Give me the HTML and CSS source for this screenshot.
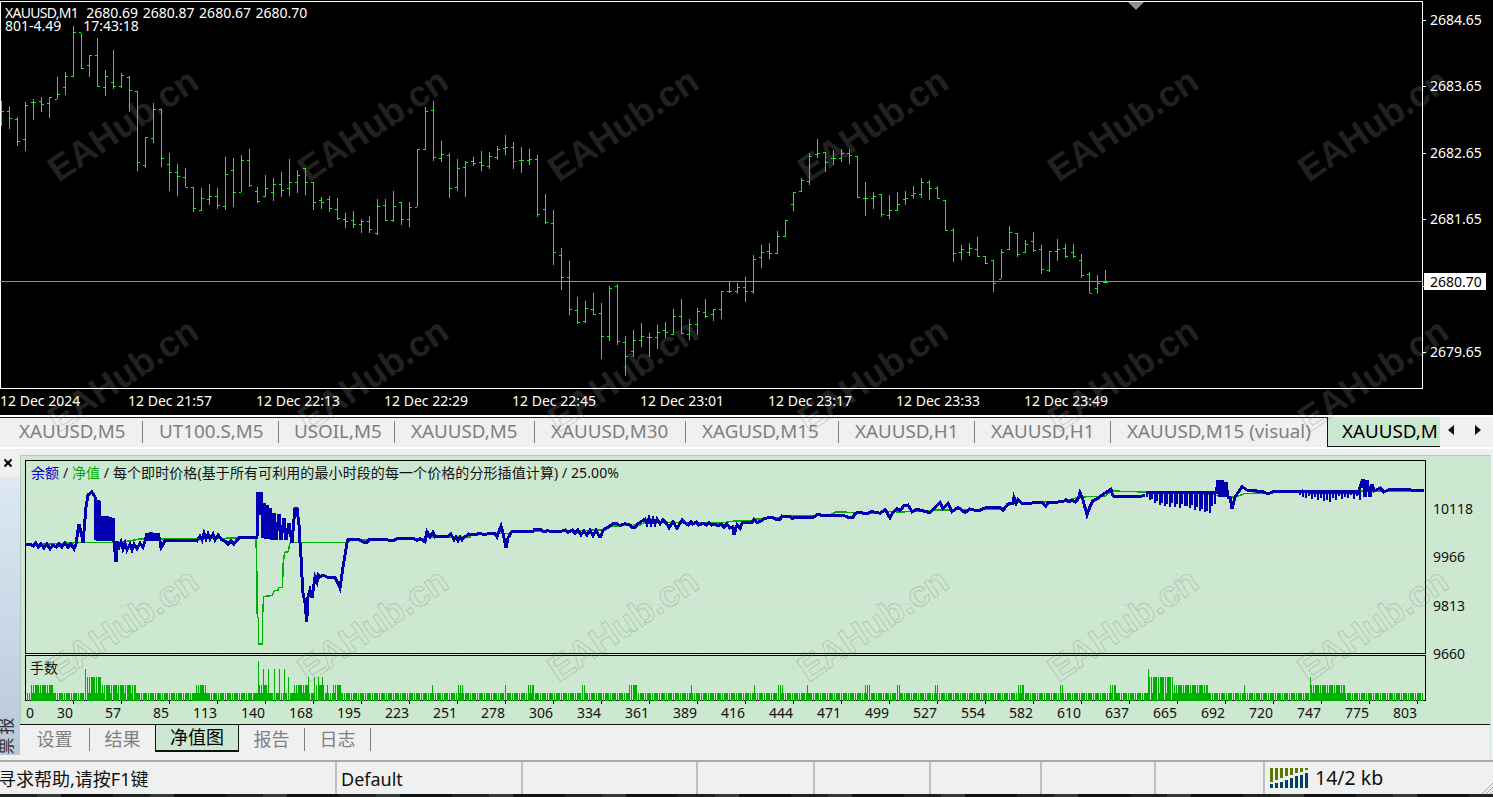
FILE: index.html
```html
<!DOCTYPE html>
<html lang="zh">
<head>
<meta charset="utf-8">
<title>XAUUSD,M1</title>
<link rel="stylesheet" href="styles.css">
</head>
<body>
<div class="app">
  <section class="market">
    <div class="wm-grid wm-solid">
      <span>EAHub.cn</span><span>EAHub.cn</span><span>EAHub.cn</span><span>EAHub.cn</span><span>EAHub.cn</span><span>EAHub.cn</span>
      <span>EAHub.cn</span><span>EAHub.cn</span><span>EAHub.cn</span><span>EAHub.cn</span><span>EAHub.cn</span><span>EAHub.cn</span>
    </div>
    <svg class="market-plot" viewBox="0 0 1423 389" width="1423" height="389" aria-hidden="true">
      <rect class="frame" x="0.5" y="1.5" width="1422" height="387"/>
      <path class="bid" d="M0 281.5H1423"/>
      <path class="ohlc" d="M1.5 101V126M2 111.5H4M9.5 106V129M7 111.5H9M10 118.5H12M17.5 117V146M15 119.5H17M18 141.5H20M25.5 102V151M23 139.5H25M26 105.5H28M33.5 99V120M31 102.5H33M34 102.5H36M41.5 97V112M39 101.5H41M42 104.5H44M49.5 97V118M47 103.5H49M50 97.5H52M57.5 77V99M55 99.5H57M58 94.5H60M65.5 72V95M63 87.5H65M66 76.5H68M73.5 26V77M71 76.5H73M74 32.5H76M81.5 33V69M79 32.5H81M82 68.5H84M89.5 55V77M87 65.5H89M90 55.5H92M97.5 38V87M95 55.5H97M98 86.5H100M105.5 70V96M103 87.5H105M106 76.5H108M113.5 50V89M111 82.5H113M114 86.5H116M121.5 73V88M119 86.5H121M122 75.5H124M129.5 76V112M127 77.5H129M130 90.5H132M137.5 91V171M135 91.5H137M138 162.5H140M145.5 137V168M143 165.5H145M146 137.5H148M153.5 103V143M151 138.5H153M154 109.5H156M161.5 109V167M159 109.5H161M162 158.5H164M169.5 153V191M167 164.5H169M170 172.5H172M177.5 164V196M175 172.5H177M178 176.5H180M185.5 168V187M183 177.5H185M186 187.5H188M193.5 187V212M191 187.5H193M194 208.5H196M201.5 188V211M199 210.5H201M202 198.5H204M209.5 184V205M207 199.5H209M210 196.5H212M217.5 188V209M215 196.5H217M218 205.5H220M225.5 157V210M223 206.5H225M226 174.5H228M233.5 158V207M231 170.5H233M234 192.5H236M241.5 155V192M239 192.5H241M242 160.5H244M249.5 149V187M247 160.5H249M250 185.5H252M257.5 187V203M255 191.5H257M258 201.5H260M265.5 175V197M263 196.5H265M266 188.5H268M273.5 178V201M271 192.5H273M274 184.5H276M281.5 172V197M279 184.5H281M282 190.5H284M289.5 159V196M287 188.5H289M290 182.5H292M297.5 170V193M295 182.5H297M298 175.5H300M305.5 168V195M303 168.5H305M306 182.5H308M313.5 182V210M311 182.5H313M314 202.5H316M321.5 197V209M319 200.5H321M322 202.5H324M329.5 196V212M327 199.5H329M330 208.5H332M337.5 198V220M335 209.5H337M338 218.5H340M345.5 213V228M343 219.5H345M346 221.5H348M353.5 211V228M351 220.5H353M354 224.5H356M361.5 219V233M359 224.5H361M362 221.5H364M369.5 216V233M367 221.5H369M370 229.5H372M377.5 199V235M375 233.5H377M378 206.5H380M385.5 199V221M383 205.5H385M386 220.5H388M393.5 191V222M391 220.5H393M394 206.5H396M401.5 202V225M399 202.5H401M402 219.5H404M409.5 202V227M407 219.5H409M410 207.5H412M417.5 149V207M415 207.5H417M418 149.5H420M425.5 107V150M423 149.5H425M426 111.5H428M433.5 101V161M431 110.5H433M434 157.5H436M441.5 141V162M439 158.5H441M442 154.5H444M449.5 153V198M447 155.5H449M450 188.5H452M457.5 159V191M455 187.5H457M458 168.5H460M465.5 161V197M463 167.5H465M466 162.5H468M473.5 157V166M471 161.5H473M474 163.5H476M481.5 151V171M479 162.5H481M482 165.5H484M489.5 152V169M487 166.5H489M490 156.5H492M497.5 146V160M495 157.5H497M498 149.5H500M505.5 135V155M503 148.5H505M506 147.5H508M513.5 142V169M511 147.5H513M514 161.5H516M521.5 147V173M519 160.5H521M522 160.5H524M529.5 149V165M527 160.5H529M530 159.5H532M537.5 155V217M535 159.5H537M538 214.5H540M545.5 194V224M543 209.5H545M546 222.5H548M553.5 210V265M551 223.5H553M554 252.5H556M561.5 248V290M559 255.5H561M562 277.5H564M569.5 261V315M567 277.5H569M570 309.5H572M577.5 297V324M575 310.5H577M578 322.5H580M585.5 301V323M583 321.5H585M586 308.5H588M593.5 293V315M591 309.5H593M594 314.5H596M601.5 303V359M599 313.5H601M602 336.5H604M609.5 286V341M607 336.5H609M610 288.5H612M617.5 284V345M615 286.5H617M618 341.5H620M625.5 336V376M623 342.5H625M626 356.5H628M633.5 330V357M631 351.5H633M634 340.5H636M641.5 323V347M639 340.5H641M642 336.5H644M649.5 333V357M647 337.5H649M650 337.5H652M657.5 325V349M655 337.5H657M658 332.5H660M665.5 322V338M663 330.5H665M666 332.5H668M673.5 309V335M671 334.5H673M674 316.5H676M681.5 299V334M679 316.5H681M682 333.5H684M689.5 319V340M687 334.5H689M690 324.5H692M697.5 308V335M695 324.5H697M698 311.5H700M705.5 299V318M703 312.5H705M706 316.5H708M713.5 309V321M711 314.5H713M714 309.5H716M721.5 291V319M719 309.5H721M722 291.5H724M729.5 282V293M727 291.5H729M730 291.5H732M737.5 283V294M735 291.5H737M738 287.5H740M745.5 277V302M743 287.5H745M746 291.5H748M753.5 255V294M751 291.5H753M754 259.5H756M761.5 245V268M759 257.5H761M762 252.5H764M769.5 243V259M767 251.5H769M770 253.5H772M777.5 231V254M775 253.5H777M778 236.5H780M785.5 220V237M783 236.5H785M786 220.5H788M793.5 192V211M791 204.5H793M794 192.5H796M801.5 178V192M799 191.5H801M802 180.5H804M809.5 153V185M807 181.5H809M810 156.5H812M817.5 139V158M815 154.5H817M818 153.5H820M825.5 152V172M823 152.5H825M826 162.5H828M833.5 150V165M831 158.5H833M834 158.5H836M841.5 149V162M839 158.5H841M842 153.5H844M849.5 149V164M847 153.5H849M850 155.5H852M857.5 156V198M855 156.5H857M858 197.5H860M865.5 182V216M863 198.5H865M866 198.5H868M873.5 192V209M871 198.5H873M874 196.5H876M881.5 194V217M879 194.5H881M882 214.5H884M889.5 195V219M887 215.5H889M890 210.5H892M897.5 192V211M895 210.5H897M898 204.5H900M905.5 191V205M903 199.5H905M906 198.5H908M913.5 186V199M911 195.5H913M914 193.5H916M921.5 178V198M919 194.5H921M922 182.5H924M929.5 180V200M927 182.5H929M930 188.5H932M937.5 186V199M935 188.5H937M938 198.5H940M945.5 200V231M943 200.5H945M946 230.5H948M953.5 228V262M951 230.5H953M954 253.5H956M961.5 245V260M959 252.5H961M962 249.5H964M969.5 243V256M967 252.5H969M970 248.5H972M977.5 237V257M975 249.5H977M978 256.5H980M985.5 256V264M983 256.5H985M986 263.5H988M993.5 260V292M991 260.5H993M994 283.5H996M1001.5 249V279M999 279.5H1001M1002 252.5H1004M1009.5 226V250M1007 249.5H1009M1010 232.5H1012M1017.5 233V257M1015 233.5H1017M1018 254.5H1020M1025.5 240V253M1023 252.5H1025M1026 244.5H1028M1033.5 232V252M1031 241.5H1033M1034 250.5H1036M1041.5 245V274M1039 249.5H1041M1042 269.5H1044M1049.5 251V272M1047 270.5H1049M1050 251.5H1052M1057.5 239V261M1055 251.5H1057M1058 249.5H1060M1065.5 244V258M1063 248.5H1065M1066 256.5H1068M1073.5 244V258M1071 252.5H1073M1074 256.5H1076M1081.5 254V278M1079 260.5H1081M1082 275.5H1084M1089.5 272V293M1087 274.5H1089M1090 293.5H1092M1097.5 275V294M1095 288.5H1097M1098 283.5H1100M1105.5 270V283M1103 282.5H1105M1106 282.5H1108"/>
      <path class="ticks" d="M1.5 389V392M129.5 389V392M257.5 389V392M385.5 389V392M513.5 389V392M641.5 389V392M769.5 389V392M897.5 389V392M1025.5 389V392M1153.5 389V392M1281.5 389V392M1409.5 389V392"/>
      <path class="shift" d="M1128 2H1144L1136 10Z"/>
    </svg>
    <div class="price-scale">
      <span>2684.65</span><span>2683.65</span><span>2682.65</span><span>2681.65</span><span></span><span>2679.65</span>
      <b class="price-tag">2680.70</b>
    </div>
    <div class="time-scale">
      <span>12 Dec 2024</span><span>12 Dec 21:57</span><span>12 Dec 22:13</span><span>12 Dec 22:29</span><span>12 Dec 22:45</span><span>12 Dec 23:01</span><span>12 Dec 23:17</span><span>12 Dec 23:33</span><span>12 Dec 23:49</span>
    </div>
    <div class="quote">
      <div class="quote-line"><span class="sym">XAUUSD,M1</span>  <span class="nums">2680.69 2680.87 2680.67 2680.70</span></div>
      <div class="quote-line">801-4.49      17:43:18</div>
    </div>
  </section>

  <div class="lower">
    <nav class="chart-tabs">
      <div class="tab-list">
        <span class="ctab c1">XAUUSD,M5</span><span class="ctab c2">UT100.S,M5</span><span class="ctab c3">USOIL,M5</span><span class="ctab c4">XAUUSD,M5</span><span class="ctab c5">XAUUSD,M30</span><span class="ctab c6">XAGUSD,M15</span><span class="ctab c7">XAUUSD,H1</span><span class="ctab c8">XAUUSD,H1</span><span class="ctab c9">XAUUSD,M15 (visual)</span>
      </div>
      <span class="ctab-active">XAUUSD,M</span>
      <div class="tab-arrows">
        <svg width="8" height="10" viewBox="0 0 8 10"><path d="M7 0V10L1 5Z"/></svg>
        <svg width="8" height="10" viewBox="0 0 8 10"><path d="M1 0V10L7 5Z"/></svg>
      </div>
    </nav>

    <section class="tester">
      <aside class="side">
        <div class="close"><svg width="10" height="10" viewBox="0 0 10 10"><path d="M1.5 1.5L8.5 8.5M8.5 1.5L1.5 8.5"/></svg></div>
        <div class="side-strip"><span class="side-a">报</span><span class="side-b">票</span></div>
      </aside>
      <div class="tester-main">
        <div class="graph-area">
          <div class="graph-row">
            <svg class="equity" viewBox="25 460 1401 194" width="1401" height="194" aria-hidden="true">
              <rect class="gframe" x="25.5" y="460.5" width="1400" height="193"/>
              <path class="grid" d="M73 461V653M121 461V653M169 461V653M217 461V653M265 461V653M313 461V653M361 461V653M409 461V653M457 461V653M505 461V653M553 461V653M601 461V653M649 461V653M697 461V653M745 461V653M793 461V653M841 461V653M889 461V653M937 461V653M985 461V653M1033 461V653M1081 461V653M1129 461V653M1177 461V653M1225 461V653M1273 461V653M1321 461V653M1369 461V653M1417 461V653M26 508.5H1425M26 556.5H1425M26 604.5H1425"/>
              <polyline class="balance" points="26,545 80,542.5 120,542.5 140,539 256,538 256.7,565 257.3,617 258.3,618 258.3,644 262.3,644 262.3,620 263.7,596.7 272.3,595.3 274.3,590.7 278.7,590 278.7,587.3 282.3,587.3 282.7,578.3 283.3,561.7 284.7,552.3 288.3,551.7 289.7,543.3 291.7,542.3 348,542.3 350,540 420,539 430,537 470,537 470,533.5 510,533.5 512,532 540,531 605,530 612,526 640,525 645,522 720,523 735,521 752,521 756,519 775,518 785,516 830,515 836,512 880,513 884,511 900,512 940,510 1000,509 1015,502.5 1060,502 1080,497 1105,496 1112,491 1210,494 1220,496 1236,497 1245,493.5 1330,491 1365,491 1424,491"/>
              <polyline class="equity-line" points="26,545 30,544 33,546 36,543 38,547 41,544 44,548 47,544 50,549 53,545 56,547 59,544 62,547 65,543 68,547 71,544 74,549 76,544 79,524 82,537 83,543 86,507 88,495 92,492 95,497 96,540 97,500 98,541 99,500 100,541 101,516 102,541 104,516 105,541 107,516 108,541 110,517 111,541 113,518 114,542 116,562 117,541 119,547 121,542 123,549 125,543 127,550 130,544 132,550 134,544 137,549 140,543 143,547 145,541 147,533 149,541 151,532 153,541 155,533 157,541 158,533 160,541 161,548 163,545 165,540 180,540 195,540 197,541 200,536 202,540 204,533 206,539 208,534 210,539 213,534 215,540 218,535 222,540 225,541 228,544 231,541 234,544 237,540 240,537 257,537 258,492 260,515 261,492 263,538 264,503 266,539 267,505 269,539 270,508 272,540 274,513 276,540 279,514 281,540 284,518 286,540 289,523 292,543 295,508 297,508 299,525 300,543 301,557 302,577 303,593 305,603 306.7,622 308,597 310,590 312,598 315,577 317,582 318,575 320,577 323,575 327,577 335,577 340,588 343,567 347,543 348,539 358,539 363,542 367,542 370,539 380,539 393,540.7 397,538.7 413,538 417,540.5 420,538.5 425,541.7 427,531.7 430,536.7 433,532.3 435,537 441,536 447,537 451,534 454,540 456,537 458,541 460,537 462,540 464,537 466,536.7 469,534 475,535 480,533 484,535 490,533 495,533.3 497,537 501,526 503,533 506,548 508,538 512,531 523,531 533,531.7 535,529 540,529 543,531.7 548,530.7 552,532 560,531.7 565,530 568,532.3 572,530 575,533 578,530 581,535 584,531 587,535 590,530 593,536 596,530 599,536 601,536 603,530 610,526 613,523.7 617,523.7 620,525.7 625,523.7 630,525 632,527.3 635,527.3 638,523.7 645,519 647,524 649,518 651,524 653,519 655,524 657,519 660,524 663,520 667,524 669,527.7 673,521.7 677,528.3 682,520 685,523 688,525 691,522 693,524 696,522 699,525 703,523.3 706,525 709,522.5 712,525 715,524 718,526 721,524 724,527 727,524 730,528 733,526.7 734,535 737,525 740,528.3 742,523 752,522.3 754,519.3 757,522.3 760,521.7 765,518.3 772,517.3 777,520 780,519.7 782,516 790,516.7 792,518.3 797,517.3 813,517.7 818,514 822,515.7 845,516 848,517.3 853,517.3 855,513.3 860,512.3 866,514 872,511.5 880,513.3 885,509.7 890,517.7 893,512.3 897,508.3 900,510.7 904,505.7 908,505 912,511.7 917,509.3 930,512.7 940,502.7 943,508.3 948,503.3 952,511.7 958,507.3 965,512.7 970,509 978,511 985,508 1000,507.7 1003,510.3 1008,504 1013,503.3 1014,497.7 1016,503.3 1018,499.3 1022,503.3 1042,502.7 1046,506 1048,502.7 1063,501.7 1066,499.7 1069,502 1072,500 1075,502 1078,499 1080,492.7 1083,500 1087,515 1090,506.7 1093,500.7 1098,498.3 1103,494.3 1111,489.3 1113,496 1140,496.7 1145,495"/>
              <polyline class="equity-line" points="1216,494 1218,480 1220,497 1222,480 1224,497 1226,482 1228,497 1230,497 1232,509 1235,497 1242,486.7 1247,490 1263,491.7 1268,494 1273,491.7 1303,491 1308,492 1358,493 1363,479 1365,497 1367,480 1370,497 1372,484 1374,491 1380,488 1384,492 1390,489 1393,489.5 1411,490 1424,491"/>
              <path class="equity-zig" d="M1147 492V497M1150 492V500M1152 492V499M1155 492V503M1157 492V501M1160 492V505M1162 492V503M1165 492V506M1167 492V504M1170 492V507M1172 492V503M1175 492V507M1177 492V504M1180 492V508M1182 492V504M1185 492V506M1187 492V506M1190 492V508M1192 492V505M1195 492V510M1197 492V507M1200 492V511M1202 492V509M1205 492V512M1207 492V511M1210 492V513M1212 492V506M1215 492V504M1146 492.5H1216M1300 491V495M1303 491V497M1306 491V498M1309 491V496M1312 491V499M1315 491V497M1318 491V500M1321 491V498M1324 491V501M1327 491V500M1330 491V502M1333 491V498M1336 491V500M1339 491V496M1342 491V499M1345 491V497M1348 491V498M1351 491V495M1354 491V499M1357 491V496M1360 491V500M1299 491.5H1360"/>
            </svg>
            <div class="eq-scale"><span>10118</span><span>9966</span><span>9813</span><span>9660</span></div>
          </div>
          <div class="graph-row lots-row">
            <svg class="lots" viewBox="25 655 1401 47" width="1401" height="47" aria-hidden="true">
              <rect class="gframe" x="25.5" y="655.5" width="1400" height="45"/>
              <path class="grid" d="M73 656V700M121 656V700M169 656V700M217 656V700M265 656V700M313 656V700M361 656V700M409 656V700M457 656V700M505 656V700M553 656V700M601 656V700M649 656V700M697 656V700M745 656V700M793 656V700M841 656V700M889 656V700M937 656V700M985 656V700M1033 656V700M1081 656V700M1129 656V700M1177 656V700M1225 656V700M1273 656V700M1321 656V700M1369 656V700M1417 656V700"/>
              <path class="lot l1" d="M27 696.5H1424"/>
              <path class="lot l2" d="M31 692.5H53M102 692.5H136M196 692.5H207M259 692.5H268M294 692.5H308M314 692.5H324M327 692.5H328M333 692.5H341M432 692.5H433M458 692.5H463M505 692.5H506M528 692.5H534M582 692.5H585M629 692.5H637M691 692.5H692M754 692.5H755M778 692.5H783M807 692.5H808M865 692.5H870M897 692.5H900M935 692.5H939M1018 692.5H1024M1060 692.5H1063M1110 692.5H1116M1174 692.5H1208M1244 692.5H1246M1311 692.5H1345"/>
              <path class="lot l3" d="M87 688.5H101M288 688.5H290M308 688.5H310M314 688.5H316M318 688.5H319M322 688.5H323M1149 688.5H1174M1310 688.5H1311"/>
              <path class="lot l4" d="M85 684.5H87M263 684.5H264M268 684.5H269M274 684.5H275M279 684.5H280M284 684.5H285M1148 684.5H1149"/>
              <path class="lot l5" d="M258 680.5H259"/>
              <path class="gticks" d="M73 701V704M121 701V704M169 701V704M217 701V704M265 701V704M313 701V704M361 701V704M409 701V704M457 701V704M505 701V704M553 701V704M601 701V704M649 701V704M697 701V704M745 701V704M793 701V704M841 701V704M889 701V704M937 701V704M985 701V704M1033 701V704M1081 701V704M1129 701V704M1177 701V704M1225 701V704M1273 701V704M1321 701V704M1369 701V704M1417 701V704"/>
            </svg>
          </div>
          <div class="eq-xscale">
            <span class="first"><i>0</i><i>30</i></span><span>57</span><span>85</span><span>113</span><span>140</span><span>168</span><span>195</span><span>223</span><span>251</span><span>278</span><span>306</span><span>334</span><span>361</span><span>389</span><span>416</span><span>444</span><span>471</span><span>499</span><span>527</span><span>554</span><span>582</span><span>610</span><span>637</span><span>665</span><span>692</span><span>720</span><span>747</span><span>775</span><span>803</span>
          </div>
          <div class="legend"><span class="lg-blue">余额</span> / <span class="lg-green">净值</span> / 每个即时价格(基于所有可利用的最小时段的每一个价格的分形插值计算) / 25.00%</div>
          <div class="lots-title">手数</div>
        </div>
        <nav class="bottom-tabs">
          <span class="btab b1">设置</span><span class="btab b2">结果</span><span class="btab-active">净值图</span><span class="btab b3">报告</span><span class="btab b4">日志</span>
        </nav>
      </div>
    </section>

    <footer class="status">
      <span class="st s1">寻求帮助,请按F1键</span>
      <span class="st s2">Default</span>
      <span class="st s3"></span><span class="st s4"></span><span class="st s5"></span><span class="st s6"></span><span class="st s7"></span>
      <span class="st s8"></span>
      <span class="st s9">
        <svg width="40" height="24" viewBox="0 0 40 24" aria-hidden="true">
          <path class="sig-up" d="M1 2H4V16H1ZM6 2H9V14H6ZM11 2H14V12H11ZM16 2H19V10H16ZM21 2H24V9H21ZM26 2H29V7H26ZM31 2H34V6H31ZM36 2H39V4H36Z"/>
          <path class="sig-down" d="M1 18H4V22H1ZM6 17H9V22H6ZM11 16H14V22H11ZM16 14H19V22H16ZM21 12H24V22H21ZM26 10H29V22H26ZM31 9H34V22H31ZM36 7H39V22H36Z"/>
        </svg>
        <span class="kb">14/2 kb</span>
      </span>
      <svg class="grip" width="12" height="12" viewBox="0 0 12 12" aria-hidden="true"><path d="M12 1L1 12M12 5L5 12M12 9L9 12"/></svg>
    </footer>
    <div class="wm-grid wm-outline">
      <span>EAHub.cn</span><span>EAHub.cn</span><span>EAHub.cn</span><span>EAHub.cn</span><span>EAHub.cn</span><span>EAHub.cn</span>
      <span>EAHub.cn</span><span>EAHub.cn</span><span>EAHub.cn</span><span>EAHub.cn</span><span>EAHub.cn</span><span>EAHub.cn</span>
    </div>
  </div>
  <div class="desktop"></div>
</div>
</body>
</html>
```

FILE: styles.css
```css
* { box-sizing: border-box; }
html, body { margin: 0; padding: 0; background: #f0f0f0; }
body { width: 1493px; height: 797px; overflow: hidden; font-family: "Noto Sans", "Noto Sans CJK SC", sans-serif; }
.app { width: 1493px; height: 797px; display: flex; flex-direction: column; }

/* watermark */
.wm-grid { position: absolute; left: -2px; display: grid; grid-template-columns: repeat(6, 250px); grid-auto-rows: 250px; pointer-events: none; }
.wm-grid span { display: flex; align-items: center; justify-content: center; font: bold 36px "Liberation Sans", sans-serif; transform: rotate(-34deg); white-space: nowrap; }
.wm-solid { top: 0; z-index: 0; }
.wm-solid span { color: #212121; }
.wm-outline { top: -165px; z-index: 5; }
.wm-outline span { color: transparent; -webkit-text-stroke: 1px rgba(110, 120, 110, .3); }

/* market chart */
.market { position: relative; height: 415px; flex: none; background: #000; color: #fff; display: grid; grid-template-columns: 1423px 70px; grid-template-rows: 389px 26px; overflow: hidden; font-size: 14px; line-height: 18px; }
.market-plot { display: block; position: relative; z-index: 1; }
.frame { fill: none; stroke: #fff; }
.bid { stroke: #8f8f8f; fill: none; shape-rendering: crispEdges; stroke-width: 1; }
.ohlc { stroke: #10f510; fill: none; stroke-width: 1; shape-rendering: crispEdges; }
.ticks { stroke: #fff; fill: none; shape-rendering: crispEdges; }
.shift { fill: #8a909c; }
.price-scale { position: relative; z-index: 1; display: flex; flex-direction: column; padding: 11px 0 0 7px; }
.price-scale span { height: 66.4px; flex: none; line-height: 18px; position: relative; }
.price-scale span::before { content: ""; position: absolute; left: -7px; top: 9px; width: 3px; height: 1px; background: #fff; }
.price-tag { position: absolute; left: 1px; top: 273px; width: 62px; height: 17px; background: #fff; color: #000; font-weight: 400; line-height: 18px; padding-left: 6px; }
.time-scale { grid-column: 1 / 3; position: relative; z-index: 1; display: flex; margin-top: 3px; }
.time-scale span { width: 128px; flex: none; }
.quote { position: absolute; z-index: 2; left: 5px; top: 6px; line-height: 13px; }
.quote-line { white-space: pre; }
.sym { letter-spacing: -.72px; }
.nums { word-spacing: 1px; margin-left: 1px; }

/* lower */
.lower { position: relative; flex: 1; display: flex; flex-direction: column; overflow: hidden; background: #fff; }

.chart-tabs { height: 32px; margin-top: 2px; flex: none; display: flex; background: #f0f0f0; color: #7f7f7f; font-size: 18.8px; border-bottom: 2px solid #fff; }
.tab-list { width: 1327px; flex: none; display: flex; height: 30px; border-top: 1px solid #222; }
.ctab { flex: none; height: 22px; margin-top: 3px; line-height: 21px; padding-left: 16px; white-space: nowrap; overflow: hidden; border-right: 1px solid #808080; }
.c1 { width: 143px; padding-left: 19px; }
.c2 { width: 136px; }
.c3 { width: 116px; padding-left: 15px; }
.c4 { width: 140px; }
.c5 { width: 151px; }
.c6 { width: 153px; }
.c7 { width: 136px; }
.c8 { width: 136px; }
.c9 { width: 216px; border-right: 0; }
.ctab-active { width: 113px; flex: none; height: 30px; background: #cde8d0; color: #000; border-left: 1px solid #111; border-bottom: 1px solid #111; padding-left: 14px; overflow: hidden; white-space: nowrap; line-height: 28px; }
.tab-arrows { flex: 1; display: flex; gap: 19px; padding: 8px 0 0 7px; }
.tab-arrows svg { display: block; fill: #111; }

.tester { flex: none; height: 311px; display: grid; grid-template-columns: 20px 1fr; background: #f0f0f0; }
.side { display: flex; flex-direction: column; }
.close { height: 28px; padding: 9px 0 0 3px; }
.close svg { display: block; }
.close path { stroke: #000; stroke-width: 2; fill: none; }
.side-strip { height: 278px; position: relative; overflow: hidden; background: linear-gradient(#dde8f4, #b8c8da); }
.side-a, .side-b { position: absolute; left: -3px; font-size: 17px; line-height: 18px; color: #333; transform: rotate(-90deg); }
.side-a { top: 240px; }
.side-b { top: 260px; }

.tester-main { display: flex; flex-direction: column; height: 306px; margin: 6px 2px 0 0; border: 1px solid #cde8d0; border-top: 0; border-left: 0; }
.graph-area { position: relative; height: 270px; flex: none; background: #cde8d0; border-bottom: 1px solid #111; box-shadow: inset 1px 1px 0 #b3cdb8; padding: 5px 0 0 5px; }
.graph-row { display: flex; height: 195px; }
.lots-row { height: 47px; }
.equity, .lots { display: block; flex: none; overflow: visible; }
.gframe { fill: none; stroke: #000; }
.grid { stroke: #d8cfd2; stroke-dasharray: 4 4; fill: none; shape-rendering: crispEdges; }
.balance { fill: none; stroke: #00b000; stroke-width: 1.5; shape-rendering: crispEdges; }
.equity-line { fill: none; stroke: #0000b0; stroke-width: 3; stroke-linejoin: miter; shape-rendering: crispEdges; }
.equity-zig { fill: none; stroke: #0000b0; stroke-width: 2.4; shape-rendering: crispEdges; }
.eq-scale { display: flex; flex-direction: column; padding: 40px 0 0 7px; font-size: 14px; line-height: 18px; color: #111; }
.eq-scale span { height: 48.4px; flex: none; }
.lot { fill: none; stroke: #00b000; stroke-dasharray: 1.3 .45; shape-rendering: crispEdges; }
.l1 { stroke-width: 8; }
.l2 { stroke-width: 16; }
.l3 { stroke-width: 24; }
.l4 { stroke-width: 32; }
.l5 { stroke-width: 40; }
.gticks { stroke: #000; fill: none; shape-rendering: crispEdges; }
.eq-xscale { display: flex; font-size: 14px; line-height: 18px; color: #111; margin-top: 2px; text-align: right; }
.eq-xscale span { width: 48px; flex: none; }
.eq-xscale .first { display: flex; justify-content: space-between; padding-left: 1px; }
.eq-xscale i { font-style: normal; }
.legend { position: absolute; left: 11px; top: 9px; font-size: 14px; line-height: 18px; letter-spacing: .09px; color: #111; white-space: nowrap; }
.lg-blue { color: #0000c8; }
.lg-green { color: #00a800; }
.lots-title { position: absolute; left: 10px; top: 204px; font-size: 14px; line-height: 18px; color: #111; }

.bottom-tabs { flex: 1; display: flex; font-size: 18px; color: #7f7f7f; }
.btab { flex: none; height: 23px; margin-top: 3px; line-height: 23px; text-align: center; border-right: 1px solid #808080; }
.b1 { width: 70px; }
.b2 { width: 65px; border-right: 0; }
.btab-active { flex: none; width: 84px; height: 28px; margin-top: -1px; background: #cde8d0; color: #000; text-align: center; border: 1px solid #111; border-top: 0; border-bottom-width: 2px; line-height: 27px; }
.b3 { width: 66px; }
.b4 { width: 66px; }

.status { flex: 1; position: relative; display: flex; height: 34px; border-top: 2px solid #a8a8a8; background: #f0f0f0; font-size: 18px; line-height: 34px; color: #111; }
.st { flex: none; height: 32px; white-space: nowrap; overflow: hidden; border-right: 2px solid #c0c0c0; }
.s1 { width: 337px; text-indent: -2px; }
.s2 { width: 186px; padding-left: 4px; }
.s3 { width: 175px; }
.s4 { width: 117px; }
.s5 { width: 116px; }
.s6 { width: 111px; }
.s7 { width: 114px; }
.s8 { width: 109px; }
.s9 { flex: 1; border-right: 0; display: flex; align-items: center; gap: 6px; padding-left: 4px; }
.kb { font-size: 19.5px; }
.sig-up { fill: #5a7800; }
.sig-down { fill: #004060; }
.grip { position: absolute; right: 0; bottom: 0; }
.grip path { stroke: #a8a8a8; fill: none; }
.desktop { height: 3px; flex: none; background: repeating-linear-gradient(90deg, #1d2224 0 37px, #343a36 37px 61px, #101416 61px 113px); }
```
